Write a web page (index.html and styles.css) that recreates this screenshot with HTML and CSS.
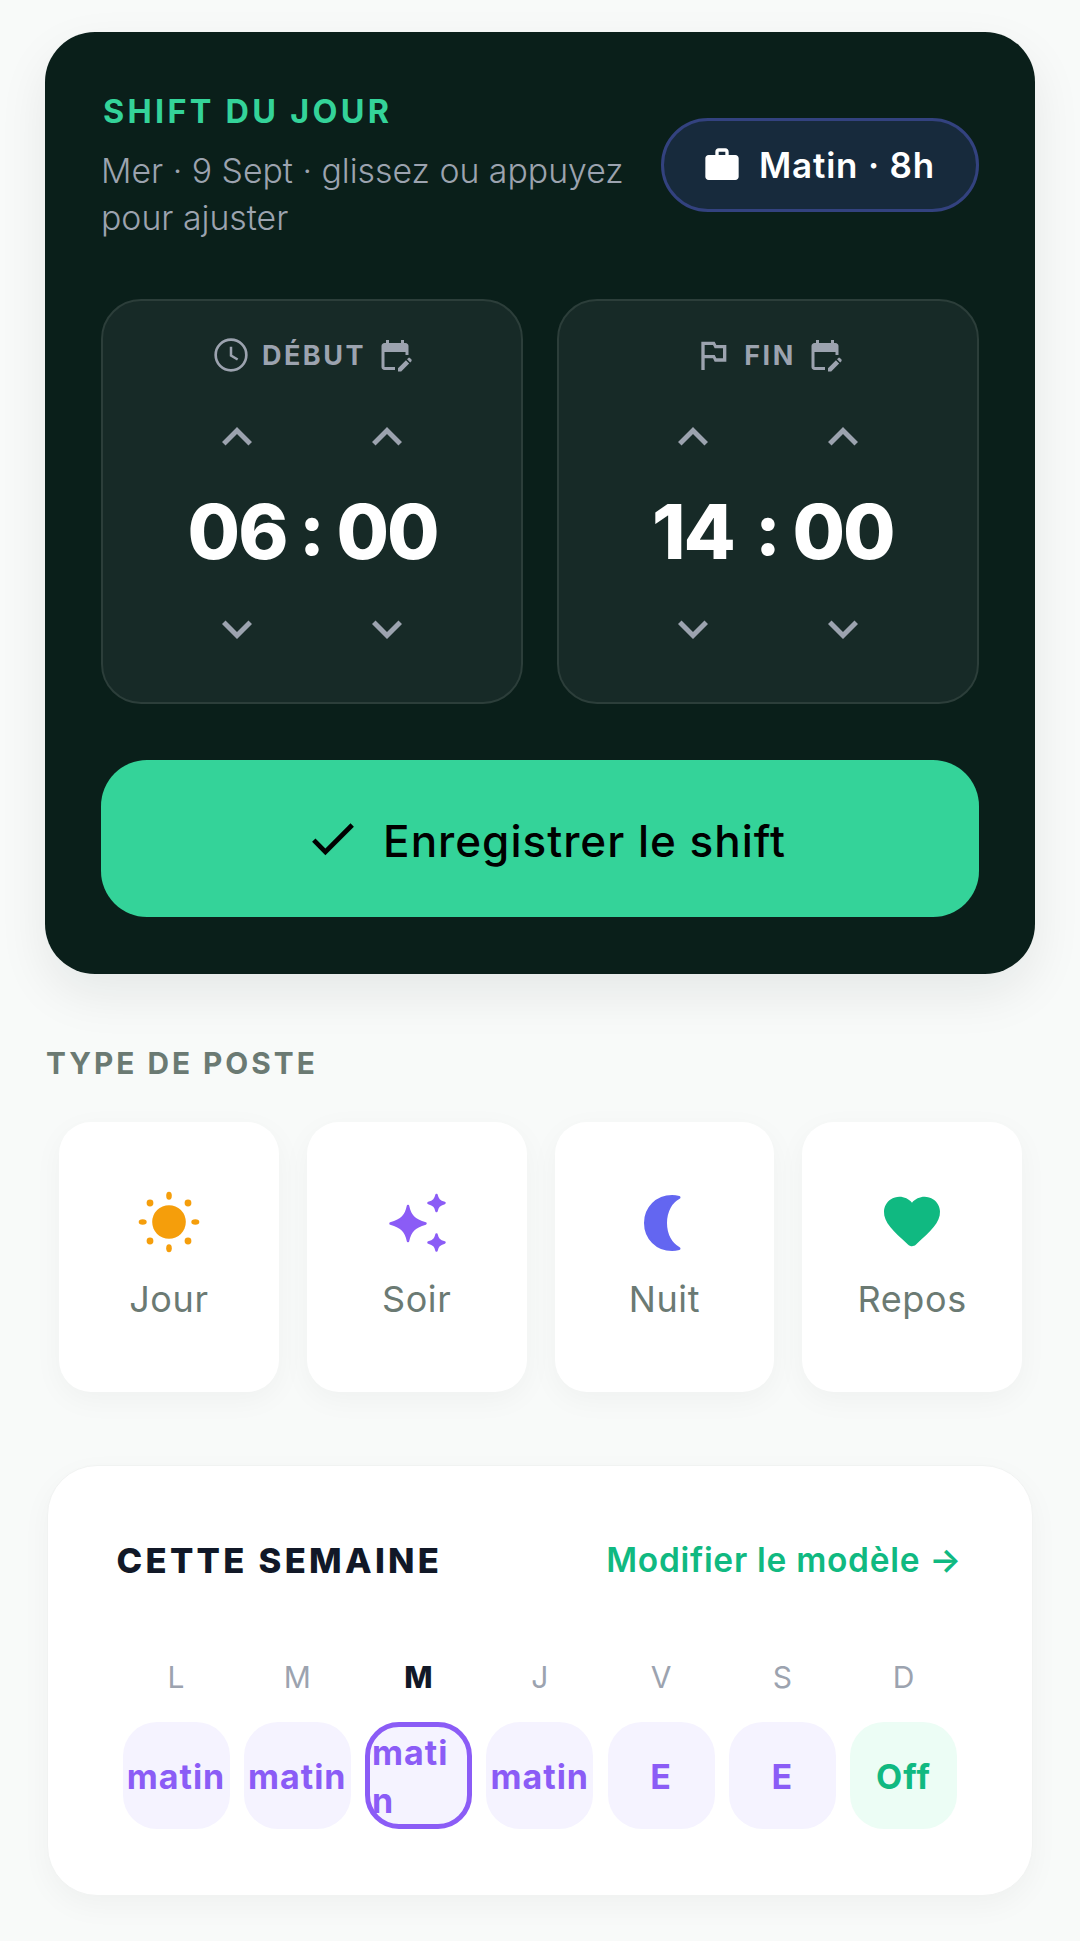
FILE: index.html
```html
<!DOCTYPE html>
<html lang="fr">
<head>
<meta charset="utf-8">
<title>Shift du jour</title>
<link rel="stylesheet" href="styles.css">
</head>
<body>
<main class="page">
  <section class="hero">
    <header class="hero-head">
      <div class="hero-text">
        <div class="eyebrow">SHIFT DU JOUR</div>
        <p class="sub">Mer · 9 Sept · glissez ou appuyez pour ajuster</p>
      </div>
      <div class="badge">
        <svg class="ic-40" viewBox="0 0 24 24"><path fill="#fff" d="M20 6h-4V4c0-1.11-.89-2-2-2h-4c-1.11 0-2 .89-2 2v2H4c-1.11 0-1.99.89-1.99 2L2 19c0 1.11.89 2 2 2h16c1.11 0 2-.89 2-2V8c0-1.11-.89-2-2-2zm-6 0h-4V4h4v2z"/></svg>
        <span>Matin · 8h</span>
      </div>
    </header>
    <div class="panels">
      <div class="panel">
        <div class="panel-label">
          <svg class="ic-40" viewBox="0 0 24 24"><circle cx="12" cy="12" r="9.2" fill="none" stroke="#9ca3af" stroke-width="1.6"/><path d="M12 7v5.3l4 2.4" fill="none" stroke="#9ca3af" stroke-width="1.5"/></svg>
          <span>DÉBUT</span>
          <svg class="ic-36" viewBox="0 0 24 24"><path fill="#9ca3af" d="M19 4h-1V2h-2v2H8V2H6v2H5c-1.11 0-2 .9-2 2v14c0 1.1.89 2 2 2h7v-2H5V10h14v2h2V6c0-1.1-.9-2-2-2zM22.84 16.28l-.71.71-2.12-2.12.71-.71c.39-.39 1.02-.39 1.41 0l.71.71c.39.39.39 1.02 0 1.41zM19.3 15.58l2.12 2.12-5.3 5.3H14v-2.12l5.3-5.3z"/></svg>
        </div>
        <div class="clock">
          <div class="unit">
            <svg class="chev" viewBox="0 0 24 24"><path d="M7.41 15.41 12 10.83l4.59 4.58L18 14l-6-6-6 6z"/></svg>
            <div class="num">06</div>
            <svg class="chev" viewBox="0 0 24 24"><path d="M7.41 8.59 12 13.17l4.59-4.58L18 10l-6 6-6-6z"/></svg>
          </div>
          <div class="colon">:</div>
          <div class="unit">
            <svg class="chev" viewBox="0 0 24 24"><path d="M7.41 15.41 12 10.83l4.59 4.58L18 14l-6-6-6 6z"/></svg>
            <div class="num">00</div>
            <svg class="chev" viewBox="0 0 24 24"><path d="M7.41 8.59 12 13.17l4.59-4.58L18 10l-6 6-6-6z"/></svg>
          </div>
        </div>
      </div>
      <div class="panel">
        <div class="panel-label">
          <svg class="ic-40" viewBox="0 0 24 24"><path fill="#9ca3af" d="M14 6l-1-2H5v17h2v-7h5l1 2h7V6h-6zm4 8h-4l-1-2H7V6h5l1 2h5v6z"/></svg>
          <span>FIN</span>
          <svg class="ic-36" viewBox="0 0 24 24"><path fill="#9ca3af" d="M19 4h-1V2h-2v2H8V2H6v2H5c-1.11 0-2 .9-2 2v14c0 1.1.89 2 2 2h7v-2H5V10h14v2h2V6c0-1.1-.9-2-2-2zM22.84 16.28l-.71.71-2.12-2.12.71-.71c.39-.39 1.02-.39 1.41 0l.71.71c.39.39.39 1.02 0 1.41zM19.3 15.58l2.12 2.12-5.3 5.3H14v-2.12l5.3-5.3z"/></svg>
        </div>
        <div class="clock">
          <div class="unit">
            <svg class="chev" viewBox="0 0 24 24"><path d="M7.41 15.41 12 10.83l4.59 4.58L18 14l-6-6-6 6z"/></svg>
            <div class="num">14</div>
            <svg class="chev" viewBox="0 0 24 24"><path d="M7.41 8.59 12 13.17l4.59-4.58L18 10l-6 6-6-6z"/></svg>
          </div>
          <div class="colon">:</div>
          <div class="unit">
            <svg class="chev" viewBox="0 0 24 24"><path d="M7.41 15.41 12 10.83l4.59 4.58L18 14l-6-6-6 6z"/></svg>
            <div class="num">00</div>
            <svg class="chev" viewBox="0 0 24 24"><path d="M7.41 8.59 12 13.17l4.59-4.58L18 10l-6 6-6-6z"/></svg>
          </div>
        </div>
      </div>
    </div>
    <button class="save" type="button">
      <svg class="ic-save" viewBox="0 0 24 24"><path d="M9 16.17 4.83 12l-1.42 1.41L9 19 21 7l-1.41-1.41z"/></svg>
      <span>Enregistrer le shift</span>
    </button>
  </section>

  <h2 class="section-label">TYPE DE POSTE</h2>
  <div class="types">
    <div class="type">
      <svg class="type-ic" viewBox="0 0 60 60" fill="#f59e0b">
        <circle cx="30" cy="30" r="16.8"/>
        <ellipse cx="30" cy="3.7" rx="2.8" ry="4"/>
        <ellipse cx="30" cy="56.3" rx="2.8" ry="4"/>
        <ellipse cx="3.7" cy="30" rx="4" ry="2.8"/>
        <ellipse cx="56.3" cy="30" rx="4" ry="2.8"/>
        <circle cx="11" cy="11" r="3.4"/>
        <circle cx="49" cy="11" r="3.4"/>
        <circle cx="11" cy="49" r="3.4"/>
        <circle cx="49" cy="49" r="3.4"/>
      </svg>
      <span>Jour</span>
    </div>
    <div class="type">
      <svg class="type-ic" viewBox="0 0 60 60" fill="#8b5cf6" stroke="#8b5cf6" stroke-width="2.5" stroke-linejoin="round">
        <path d="M21 14 C23 24 27 28 38.500 31.500 C27 35 23 39 21 49 C19 39 15 35 3.500 31.500 C15 28 19 24 21 14Z"/>
        <path d="M49.500 3 C50.500 7.500 52 9.500 57.500 11 C52 12.500 50.500 14.500 49.500 19 C48.500 14.500 47 12.500 41.500 11 C47 9.500 48.500 7.500 49.500 3Z"/>
        <path d="M49.500 42.500 C50.500 47 52 49 57.500 50.500 C52 52 50.500 54 49.500 58.500 C48.500 54 47 52 41.500 50.500 C47 49 48.500 47 49.500 42.500Z"/>
      </svg>
      <span>Soir</span>
    </div>
    <div class="type">
      <svg class="type-ic" viewBox="0 0 60 60"><path fill="#6366f1" stroke="#6366f1" stroke-width="3" stroke-linejoin="round" d="M45 5.500 C42.500 4.800 40.500 4.500 38 4.500 C23 4.500 11.500 16 11.500 31 C11.500 46 23 57.500 38 57.500 C40.500 57.500 42.500 57.200 45 56.500 C37 52.500 31.500 43 31.500 31 C31.500 19 37 9.500 45 5.500Z"/></svg>
      <span>Nuit</span>
    </div>
    <div class="type">
      <svg class="type-ic" viewBox="1.29 1.29 21.43 21.43"><path fill="#10b981" d="M13.35 20.13c-.76.69-1.93.69-2.69-.01l-.11-.1C5.3 15.27 1.87 12.16 2 8.28c.06-1.7.93-3.33 2.34-4.29 2.64-1.8 5.9-.96 7.66 1.1 1.76-2.06 5.02-2.91 7.66-1.1 1.41.96 2.28 2.59 2.34 4.29.14 3.88-3.3 6.99-8.55 11.76l-.1.09z"/></svg>
      <span>Repos</span>
    </div>
  </div>

  <section class="week">
    <header class="week-head">
      <h2 class="week-title">CETTE SEMAINE</h2>
      <a class="week-link">Modifier le modèle →</a>
    </header>
    <div class="days">
      <div class="day"><span class="day-name">L</span><div class="cell">matin</div></div>
      <div class="day"><span class="day-name">M</span><div class="cell">matin</div></div>
      <div class="day today"><span class="day-name">M</span><div class="cell"><span>matin</span></div></div>
      <div class="day"><span class="day-name">J</span><div class="cell">matin</div></div>
      <div class="day"><span class="day-name">V</span><div class="cell">E</div></div>
      <div class="day"><span class="day-name">S</span><div class="cell">E</div></div>
      <div class="day"><span class="day-name">D</span><div class="cell off">Off</div></div>
    </div>
  </section>
</main>
</body>
</html>
```

FILE: styles.css
```css
* { box-sizing: border-box; }
html, body { margin: 0; padding: 0; }
body {
  background: #f8faf9;
  font-family: Inter, "Noto Sans", sans-serif;
  color: #111827;
}
.page { padding: 32px 45px 44px; }

.hero {
  background: #0a1f1a;
  border-radius: 50px;
  padding: 56px;
  height: 942px;
  box-shadow: 0 20px 50px rgba(10, 31, 26, 0.08);
}
.hero-head {
  display: flex;
  justify-content: space-between;
  align-items: flex-start;
  height: 211px;
}
.hero-text { width: 530px; padding-top: 5px; }
.eyebrow {
  color: #34d399;
  font-size: 32.4px;
  font-weight: 700;
  letter-spacing: 3.3px;
  line-height: 38px;
  margin-left: 2px;
}
.sub {
  margin: 16px 0 0;
  color: #9ca3af;
  font-size: 33.8px;
  font-weight: 300;
  line-height: 47px;
}
.badge {
  display: flex;
  align-items: center;
  gap: 17px;
  width: 318px;
  height: 94px;
  margin-top: 30px;
  padding-left: 38px;
  border: 3px solid #33427f;
  border-radius: 47px;
  background: #172a3c;
  color: #fff;
  font-size: 35px;
  font-weight: 600;
  letter-spacing: 0.8px;
  white-space: nowrap;
}
.ic-40 { width: 40px; height: 40px; flex: none; }
.ic-36 { width: 36px; height: 36px; flex: none; }

.panels {
  display: grid;
  grid-template-columns: 1fr 1fr;
  gap: 34px;
}
.panel {
  height: 405px;
  border: 2.5px solid #2c3e3a;
  border-radius: 40px;
  background: #172a27;
  padding-top: 34px;
}
.panel-label {
  display: flex;
  justify-content: center;
  align-items: center;
  gap: 11px;
  height: 40px;
  color: #9ca3af;
  font-size: 27px;
  font-weight: 700;
  letter-spacing: 2.5px;
}
.clock { display: flex; justify-content: center; margin-top: 32px; }
.unit {
  display: flex;
  flex-direction: column;
  align-items: center;
  width: 120px;
}
.chev { width: 60px; height: 60px; fill: #9ca3af; }
.num {
  height: 132px;
  line-height: 129px;
  color: #fff;
  font-size: 76px;
  font-weight: 800;
  letter-spacing: -2px;
  white-space: nowrap;
}
.colon {
  width: 30px;
  margin-top: 60px;
  height: 132px;
  line-height: 124px;
  text-align: center;
  color: #fff;
  font-size: 72px;
  font-weight: 800;
}

.save {
  display: flex;
  justify-content: center;
  align-items: center;
  gap: 22px;
  width: 100%;
  height: 157px;
  margin-top: 56px;
  padding: 4px 0 0 10px;
  border: 0;
  border-radius: 46px;
  background: #34d399;
  color: #000;
  font-family: inherit;
  font-size: 44px;
  font-weight: 500;
  letter-spacing: 1px;
}
.ic-save { width: 57px; height: 57px; margin-top: -4px; }

.section-label {
  margin: 71px 0 0 1px;
  color: #6b7a73;
  font-size: 29.8px;
  font-weight: 700;
  letter-spacing: 3px;
  line-height: 36px;
}
.types {
  display: grid;
  grid-template-columns: repeat(4, 1fr);
  gap: 28px;
  margin: 41px 13px 0 14px;
}
.type {
  display: flex;
  flex-direction: column;
  align-items: center;
  height: 270px;
  padding-top: 70px;
  border-radius: 32px;
  background: #fff;
  box-shadow: 0 8px 30px rgba(10, 31, 26, 0.04);
  color: #6b7a73;
  font-size: 36px;
  letter-spacing: 0.6px;
  line-height: 40px;
}
.type-ic { width: 60px; height: 60px; margin-bottom: 27px; overflow: visible; }

.week {
  height: 431px;
  margin: 73px 2.5px 0 1.5px;
  padding: 0 74.5px 0 75px;
  border: 1.5px solid #f1f3f2;
  border-radius: 50px;
  background: #fff;
  box-shadow: 0 10px 30px rgba(10, 31, 26, 0.04);
}
.week-head {
  display: flex;
  justify-content: space-between;
  align-items: center;
  height: 60px;
  margin: 63.5px 0 0;
}
.week-title {
  margin: 0 0 0 -6px;
  color: #111827;
  font-size: 34.6px;
  font-weight: 800;
  letter-spacing: 3.3px;
}
.week-link {
  color: #10b981;
  font-size: 33.5px;
  font-weight: 600;
  letter-spacing: 0.7px;
  white-space: nowrap;
  margin-right: -5px;
}
.days {
  display: grid;
  grid-template-columns: repeat(7, 107px);
  justify-content: space-between;
  margin-top: 67px;
}
.day { display: flex; flex-direction: column; align-items: center; }
.day-name {
  height: 40px;
  line-height: 40px;
  margin-bottom: 25px;
  color: #9ca3af;
  font-size: 30px;
}
.today .day-name { color: #111827; font-weight: 800; }
.cell {
  display: flex;
  justify-content: center;
  align-items: center;
  width: 107px;
  height: 107px;
  padding-top: 3px;
  border-radius: 34px;
  background: #f5f3ff;
  color: #8b5cf6;
  font-size: 34px;
  font-weight: 700;
  letter-spacing: 1px;
  line-height: 48px;
  white-space: nowrap;
}
.cell.off { background: #ecfdf5; color: #10b981; }
.today .cell {
  justify-content: flex-start;
  padding: 3px 12px 0 2px;
  border: 5px solid #8b5cf6;
  white-space: normal;
  word-break: break-all;
}
```
